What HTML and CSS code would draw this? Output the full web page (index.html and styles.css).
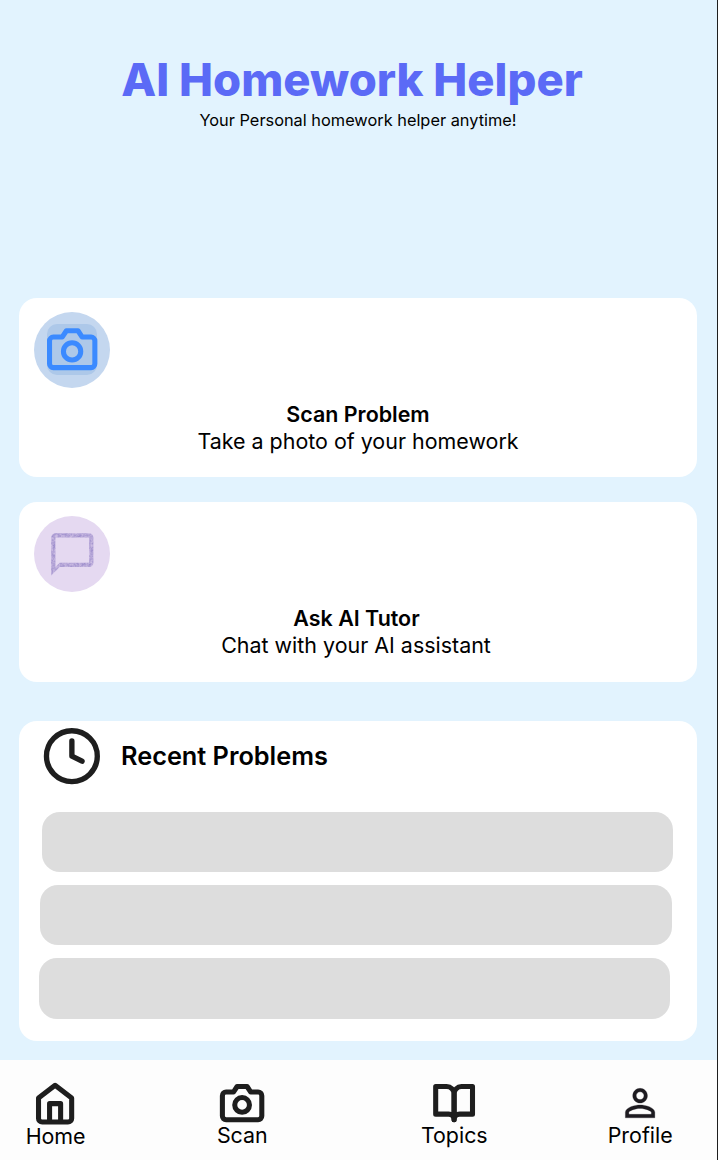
FILE: index.html
```html
<!DOCTYPE html>
<html lang="en">
<head>
<meta charset="utf-8">
<title>AI Homework Helper</title>
<link rel="stylesheet" href="styles.css">
</head>
<body>
<div class="app">
  <header class="header">
    <h1 class="title">AI Homework Helper</h1>
    <p class="subtitle">Your Personal homework helper anytime!</p>
  </header>

  <main class="content">
    <section class="card action">
      <div class="badge badge-scan">
        <svg class="badge-icon camera-tile" viewBox="0 0 24 24" fill="none" stroke="#3b8aff" stroke-width="2.400" stroke-linejoin="round">
          <path d="M22.700 18.900a1.800 1.800 0 0 1-1.800 1.800H3a1.800 1.800 0 0 1-1.800-1.800V8a1.800 1.800 0 0 1 1.800-1.800h4.200l2-3h5.500l2 3h4.200a1.800 1.800 0 0 1 1.800 1.800z"/>
          <circle cx="11.900" cy="13" r="4.100"/>
        </svg>
      </div>
      <h2 class="action-title">Scan Problem</h2>
      <p class="action-text">Take a photo of your homework</p>
    </section>

    <section class="card action ask">
      <div class="badge badge-chat">
        <svg class="badge-icon" viewBox="0 0 24 24">
          <filter id="grain" x="0" y="0" width="1" height="1" color-interpolation-filters="sRGB">
            <feTurbulence type="fractalNoise" baseFrequency="0.9" numOctaves="2" seed="4" result="noise"/>
            <feColorMatrix in="noise" type="matrix" values="0.3 0 0 0 0.56  0.3 0 0 0 0.5  0.15 0 0 0 0.77  0 0 0 0 1"/>
            <feComposite in2="SourceGraphic" operator="in"/>
          </filter>
          <path filter="url(#grain)" fill="#b3a4d8" d="M4 4h16v12H6l-2 2V4m0-2c-1.100 0-2 .9-2 2v18l4-4h14c1.100 0 2-.9 2-2V4c0-1.100-.9-2-2-2H4z" fill-rule="evenodd"/>
        </svg>
      </div>
      <h2 class="action-title">Ask AI Tutor</h2>
      <p class="action-text">Chat with your AI assistant</p>
    </section>

    <section class="card recent">
      <div class="recent-head">
        <svg class="clock" viewBox="0 0 24 24" fill="none" stroke="#1e1e1e" stroke-width="2.100" stroke-linecap="round" stroke-linejoin="round">
          <circle cx="12.150" cy="12.250" r="10"/>
          <path d="M12.150 6.250v6l4 2"/>
        </svg>
        <h2 class="recent-title">Recent Problems</h2>
      </div>
      <div class="problems">
        <div class="problem first"></div>
        <div class="problem second"></div>
        <div class="problem third"></div>
      </div>
    </section>
  </main>

  <nav class="nav">
    <a class="nav-item home">
      <svg class="nav-icon" viewBox="0 0 24 24" fill="none" stroke="#1e1e1e" stroke-width="2.750" stroke-linejoin="round">
        <path d="M3 9.300l9-7 9 7v11a2 2 0 0 1-2 2H5a2 2 0 0 1-2-2z"/>
        <path d="M9 22.300V12.300h6v10"/>
      </svg>
      <span class="nav-label">Home</span>
    </a>
    <a class="nav-item scan">
      <svg class="nav-icon" viewBox="0 0 24 24" fill="none" stroke="#1e1e1e" stroke-width="2.750" stroke-linejoin="round">
        <path d="M22.700 19a2 2 0 0 1-2 2H3.300a2 2 0 0 1-2-2V8a2 2 0 0 1 2-2h4l2-3h5.400l2 3h4a2 2 0 0 1 2 2z"/>
        <circle cx="12" cy="13" r="4"/>
      </svg>
      <span class="nav-label">Scan</span>
    </a>
    <a class="nav-item topics">
      <svg class="nav-icon" viewBox="0 0 24 24" fill="none" stroke="#1e1e1e" stroke-width="2.750" stroke-linejoin="round">
        <path d="M2 3h6a4 4 0 0 1 4 4v14a3 3 0 0 0-3-3H2z"/>
        <path d="M22 3h-6a4 4 0 0 0-4 4v14a3 3 0 0 1 3-3h7z"/>
      </svg>
      <span class="nav-label">Topics</span>
    </a>
    <a class="nav-item profile">
      <svg class="nav-icon" viewBox="0 0 24 24" fill="#1d1b20" stroke="#1d1b20" stroke-width="0.150">
        <path d="M12 5.900c1.160 0 2.100.94 2.100 2.100s-.94 2.100-2.100 2.100S9.900 9.160 9.900 8s.94-2.100 2.100-2.100m0 9c2.970 0 6.100 1.460 6.100 2.100v1.100H5.900V17c0-.64 3.130-2.100 6.100-2.100M12 4C9.790 4 8 5.790 8 8s1.790 4 4 4 4-1.790 4-4-1.790-4-4-4zm0 9c-2.670 0-8 1.340-8 4v3h16v-3c0-2.660-5.330-4-8-4z"/>
      </svg>
      <span class="nav-label">Profile</span>
    </a>
  </nav>
</div>
</body>
</html>
```

FILE: styles.css
```css
* { box-sizing: border-box; }

body {
  margin: 0;
  font-family: Inter, "Liberation Sans", sans-serif;
  color: #000;
}

h1, h2, p { margin: 0; }
svg { display: block; overflow: visible; flex: none; }

.app {
  display: flex;
  flex-direction: column;
  width: 718px;
  height: 1160px;
  overflow: hidden;
  background: #e2f3fe;
  border-right: 1px solid #1e1e1e;
}

.header {
  height: 297.700px;
  padding-top: 52px;
  text-align: center;
}

.title {
  padding-right: 13px;
  font-size: 45.400px;
  line-height: 56px;
  font-weight: 800;
  color: #5b6af6;
  white-space: nowrap;
}

.subtitle {
  padding-top: 2px;
  padding-right: 1px;
  font-size: 16.350px;
  line-height: 20px;
}

.content {
  display: flex;
  flex-direction: column;
  height: 762.300px;
  padding: 0 20px 0 19px;
}

.card {
  flex: none;
  background: #fff;
  border-radius: 18px;
}

.action {
  height: 179.300px;
  margin-bottom: 25.300px;
  padding: 14px 15px 0;
  text-align: center;
}

.badge {
  display: flex;
  align-items: center;
  justify-content: center;
  width: 76px;
  height: 76px;
  border-radius: 50%;
}

.badge-scan { background: #c4d7ef; }
.badge-chat { background: #e5d9f1; }

.badge-icon {
  width: 50.600px;
  height: 50.600px;
}

.camera-tile {
  border-radius: 10px;
  background: #adc8e9;
}

.action-title {
  padding-top: 13px;
  font-size: 21.450px;
  line-height: 27px;
  font-weight: 600;
}

.action-text {
  font-size: 21.450px;
  line-height: 26px;
}

.ask .action-title { padding-right: 3px; }
.ask .action-text { padding-right: 4px; }

.recent {
  height: 320.300px;
  margin-top: 13.700px;
}

.recent-head {
  display: flex;
  align-items: center;
  gap: 19px;
  height: 91px;
  padding: 0 0 20.600px 22px;
}

.clock { width: 61px; height: 61px; }

.recent-title {
  font-size: 25.300px;
  line-height: 31px;
  font-weight: 600;
}

.problems {
  display: flex;
  flex-direction: column;
  gap: 12.900px;
}

.problem {
  width: 631.300px;
  height: 60.500px;
  border-radius: 18px;
  background: #ddd;
}

.first { margin-left: 22.600px; }
.second { margin-left: 21.400px; }
.third { margin-left: 20.200px; }

.nav {
  display: flex;
  flex: none;
  height: 100px;
  background: #fdfdfd;
}

.nav-item {
  display: flex;
  flex-direction: column;
  align-items: center;
  flex: none;
}

.nav-icon { width: 44.200px; height: 44.200px; }

.nav-label {
  font-size: 21.400px;
  line-height: 26px;
}

.home { width: 60px; margin-left: 25.600px; padding-top: 21.300px; }
.scan { width: 50px; margin-left: 131.700px; padding-top: 21px; }
.topics { width: 66px; margin-left: 154px; padding-top: 21.200px; }
.profile { width: 64px; margin-left: 120.900px; padding-top: 21px; }

.home .nav-icon,
.scan .nav-icon,
.profile .nav-icon { margin-left: -1px; }

.home .nav-label { margin-top: -2.500px; }
.scan .nav-label,
.topics .nav-label,
.profile .nav-label { margin-top: -3px; }
```
